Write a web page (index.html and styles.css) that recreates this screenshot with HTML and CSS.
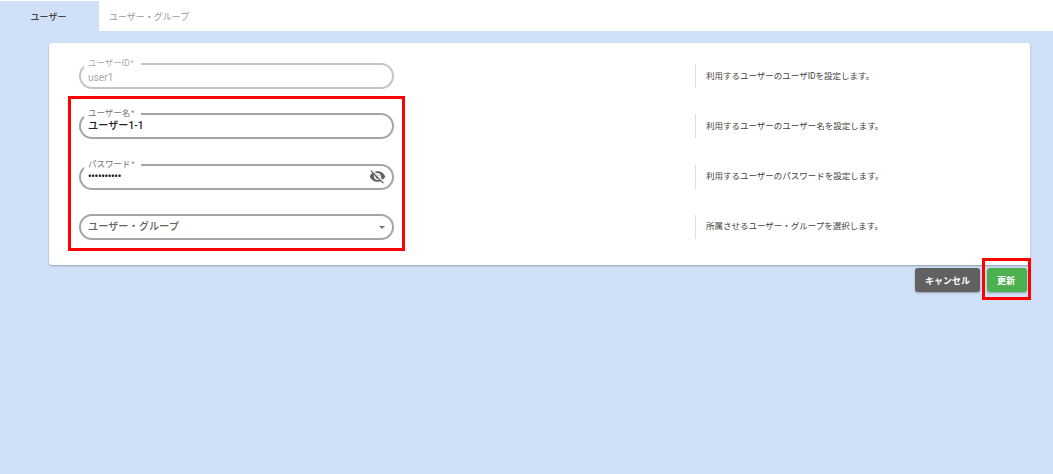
FILE: index.html
```html
<!DOCTYPE html>
<html lang="ja">
<head>
<meta charset="utf-8">
<title>ユーザー</title>
<link rel="stylesheet" href="styles.css">
</head>
<body>
<nav class="tabs">
  <div class="tab tab-active">ユーザー</div>
  <div class="tab tab-plain">ユーザー・グループ</div>
</nav>
<main class="content">
  <section class="card">
    <div class="row">
      <div class="field field-disabled">
        <span class="label">ユーザーID<span class="req">*</span></span>
        <span class="value">user1</span>
      </div>
      <p class="help">利用するユーザーのユーザIDを設定します。</p>
    </div>
    <div class="row">
      <div class="field">
        <span class="label">ユーザー名<span class="req">*</span></span>
        <span class="value value-strong">ユーザー1-1</span>
      </div>
      <p class="help">利用するユーザーのユーザー名を設定します。</p>
    </div>
    <div class="row">
      <div class="field">
        <span class="label">パスワード<span class="req">*</span></span>
        <span class="value value-dots">••••••••••</span>
        <svg class="eye" viewBox="0 0 24 24" width="17" height="17" aria-hidden="true"><path fill="#616161" d="M12 7c2.76 0 5 2.24 5 5 0 .65-.13 1.26-.36 1.83l2.92 2.92c1.51-1.26 2.7-2.89 3.43-4.75-1.73-4.39-6-7.5-11-7.5-1.4 0-2.74.25-3.98.7l2.16 2.16C10.74 7.13 11.35 7 12 7zM2 4.27l2.28 2.28.46.46C3.08 8.3 1.78 10.02 1 12c1.73 4.39 6 7.5 11 7.5 1.55 0 3.03-.3 4.38-.84l.42.42L19.73 22 21 20.73 3.27 3 2 4.27zM7.53 9.8l1.55 1.55c-.05.21-.08.43-.08.65 0 1.66 1.34 3 3 3 .22 0 .44-.03.65-.08l1.55 1.55c-.67.33-1.41.53-2.2.53-2.76 0-5-2.24-5-5 0-.79.2-1.53.53-2.2zm4.31-.78l3.15 3.15.02-.16c0-1.66-1.34-3-3-3l-.17.01z"/></svg>
      </div>
      <p class="help">利用するユーザーのパスワードを設定します。</p>
    </div>
    <div class="row">
      <div class="field">
        <span class="value value-select">ユーザー・グループ</span>
        <span class="caret"></span>
      </div>
      <p class="help">所属させるユーザー・グループを選択します。</p>
    </div>
  </section>
  <div class="actions">
    <button class="btn btn-cancel" type="button">キャンセル</button>
    <button class="btn btn-save" type="button">更新</button>
  </div>
</main>
<div class="mark mark-fields"></div>
<div class="mark mark-save"></div>
</body>
</html>
```

FILE: styles.css
```css
* { box-sizing: border-box; }
html, body { margin: 0; height: 100%; }
body {
  position: relative;
  overflow: hidden;
  background: #d0e0f6;
  font-family: Roboto, "Noto Sans CJK JP", sans-serif;
  color: #424242;
}
.tabs {
  display: flex;
  height: 31px;
  padding-top: 1px;
  background: #fff;
}
.tab {
  width: 99px;
  display: flex;
  align-items: center;
  justify-content: center;
  font-size: 9px;
  color: #8a8a8a;
}
.tab-plain {
  width: auto;
  padding-left: 10px;
  color: #9a9a9a;
}
.tab-active {
  background: #d0e0f6;
  color: #424242;
  font-weight: 500;
  padding-right: 2px;
}
.content { padding: 12px 23px 0 49px; }
.card {
  height: 222px;
  padding: 20px 0 0 30px;
  background: #fff;
  border-radius: 3px;
  box-shadow: 0 1px 2px rgba(0, 0, 0, .3);
}
.row {
  display: flex;
  align-items: center;
  height: 26px;
  margin-bottom: 24.33px;
}
.field {
  position: relative;
  flex: none;
  display: flex;
  align-items: center;
  width: 315px;
  height: 26px;
  padding: 0 7px;
  border: 2px solid #a5a5a5;
  border-radius: 13px;
  background: #fff;
}
.field-disabled { border-color: #c4c4c4; }
.label {
  position: absolute;
  left: 3px;
  top: -7px;
  padding: 0 7px 0 4px;
  background: #fff;
  font-size: 8.5px;
  line-height: 10px;
  color: #757575;
  white-space: nowrap;
}
.req { font-size: 6.5px; margin-left: 1px; vertical-align: 1px; }
.field-disabled .label { color: #aaa; }
.value { font-size: 10.2px; color: #212121; padding-bottom: 2px; }
.field-disabled .value { color: #aaa; padding-top: 3px; padding-bottom: 0; }
.value-strong { font-weight: 500; padding-top: 0; padding-bottom: 3px; }
.value-dots { font-size: 10px; letter-spacing: -.3px; font-weight: 700; padding-bottom: 0; }
.value-select { color: #616161; font-weight: 500; padding-bottom: 2px; }
.eye { position: absolute; right: 6px; top: 2px; }
.caret {
  position: absolute;
  right: 7px;
  top: 10px;
  border: 3px solid transparent;
  border-top: 3px solid #757575;
  border-bottom: 0;
}
.help {
  margin: 0 0 0 301px;
  padding: 0 0 3px 10px;
  height: 24px;
  display: flex;
  align-items: center;
  border-left: 1px solid #dedede;
  font-size: 8.5px;
  color: #424242;
  white-space: nowrap;
}
.actions {
  display: flex;
  justify-content: flex-end;
  gap: 7px;
  margin-top: 3px;
  padding-right: 3px;
}
.btn {
  height: 24px;
  border: 0;
  border-radius: 3px;
  font-family: inherit;
  font-size: 9px;
  font-weight: 700;
  color: #fff;
  box-shadow: 0 1px 2px rgba(0, 0, 0, .3);
}
.btn-cancel { width: 65px; background: #616161; }
.btn-save { width: 40px; padding: 0 2px 0 0; background: #4caf50; }
.mark { position: absolute; border: 3px solid #f00; }
.mark-fields { left: 68px; top: 96px; width: 337px; height: 155px; }
.mark-save { left: 982px; top: 258px; width: 49px; height: 42px; }
```
